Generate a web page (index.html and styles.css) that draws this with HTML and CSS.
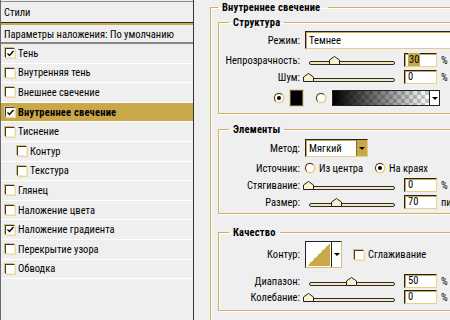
FILE: index.html
```html
<!DOCTYPE html>
<html lang="ru">
<head>
    <meta charset="UTF-8">
    <title>Стиль слоя</title>
    <link rel="stylesheet" href="styles.css">
</head>
<body>
    <div class="dialog">
        <div class="styles-list">
            <div class="list-head">Стили</div>
            <div class="list-blend">Параметры наложения: По умолчанию</div>
            <ul class="effects">
                <li><span class="check on"><svg width="7" height="7" viewBox="0 0 7 7"><path d="M0.5 3.5 L2.5 5.5 L6.5 1" fill="none" stroke="#000" stroke-width="1.4"/></svg></span>Тень</li>
                <li><span class="check"></span>Внутренняя тень</li>
                <li><span class="check"></span>Внешнее свечение</li>
                <li class="active"><span class="check on"><svg width="7" height="7" viewBox="0 0 7 7"><path d="M0.5 3.5 L2.5 5.5 L6.5 1" fill="none" stroke="#000" stroke-width="1.4"/></svg></span>Внутреннее свечение</li>
                <li><span class="check"></span>Тиснение</li>
                <li class="sub"><span class="check"></span>Контур</li>
                <li class="sub"><span class="check"></span>Текстура</li>
                <li><span class="check"></span>Глянец</li>
                <li><span class="check"></span>Наложение цвета</li>
                <li><span class="check on"><svg width="7" height="7" viewBox="0 0 7 7"><path d="M0.5 3.5 L2.5 5.5 L6.5 1" fill="none" stroke="#000" stroke-width="1.4"/></svg></span>Наложение градиента</li>
                <li><span class="check"></span>Перекрытие узора</li>
                <li><span class="check"></span>Обводка</li>
            </ul>
        </div>

        <div class="settings">
            <fieldset class="group outer">
                <legend>Внутреннее свечение</legend>

                <fieldset class="group structure">
                    <legend>Структура</legend>
                    <div class="row tall mt2">
                        <span class="label">Режим:</span>
                        <div class="select wide">Темнее</div>
                    </div>
                    <div class="row mt3">
                        <span class="label">Непрозрачность:</span>
                        <div class="slider">
                            <div class="track"></div>
                            <svg class="thumb" style="left: 30%" width="11" height="9" viewBox="0 0 11 9"><polygon points="5.5,0.5 10.5,4 10.5,8.5 0.5,8.5 0.5,4" fill="#fbf1cf" stroke="#222"/></svg>
                        </div>
                        <div class="num"><span class="selected">30</span></div>
                        <span class="unit">%</span>
                    </div>
                    <div class="row mt1">
                        <span class="label">Шум:</span>
                        <div class="slider">
                            <div class="track"></div>
                            <svg class="thumb" style="left: 0%" width="11" height="9" viewBox="0 0 11 9"><polygon points="5.5,0.5 10.5,4 10.5,8.5 0.5,8.5 0.5,4" fill="#fbf1cf" stroke="#222"/></svg>
                        </div>
                        <div class="num">0</div>
                        <span class="unit">%</span>
                    </div>
                    <div class="row tall mt4 color-row">
                        <span class="radio on first"></span>
                        <span class="swatch"></span>
                        <span class="radio second"></span>
                        <span class="gradient"></span>
                        <span class="drop-btn"><i class="arrow"></i></span>
                    </div>
                </fieldset>

                <fieldset class="group elements">
                    <legend>Элементы</legend>
                    <div class="row tall mt3">
                        <span class="label">Метод:</span>
                        <div class="select method">Мягкий<span class="select-btn"><i class="arrow"></i></span></div>
                    </div>
                    <div class="row mt3">
                        <span class="label">Источник:</span>
                        <span class="option first-opt"><span class="radio"></span>Из центра</span>
                        <span class="option"><span class="radio on"></span>На краях</span>
                    </div>
                    <div class="row mt1">
                        <span class="label">Стягивание:</span>
                        <div class="slider">
                            <div class="track"></div>
                            <svg class="thumb" style="left: 0%" width="11" height="9" viewBox="0 0 11 9"><polygon points="5.5,0.5 10.5,4 10.5,8.5 0.5,8.5 0.5,4" fill="#fbf1cf" stroke="#222"/></svg>
                        </div>
                        <div class="num">0</div>
                        <span class="unit">%</span>
                    </div>
                    <div class="row mt1">
                        <span class="label">Размер:</span>
                        <div class="slider">
                            <div class="track"></div>
                            <svg class="thumb" style="left: 32%" width="11" height="9" viewBox="0 0 11 9"><polygon points="5.5,0.5 10.5,4 10.5,8.5 0.5,8.5 0.5,4" fill="#fbf1cf" stroke="#222"/></svg>
                        </div>
                        <div class="num">70</div>
                        <span class="unit">пикс.</span>
                    </div>
                </fieldset>

                <fieldset class="group quality">
                    <legend>Качество</legend>
                    <div class="row contour-row mt2">
                        <span class="label">Контур:</span>
                        <div class="contour">
                            <span class="curve"></span>
                            <span class="contour-btn"><i class="arrow"></i></span>
                        </div>
                        <span class="check plain"></span>
                        <span class="check-text">Сглаживание</span>
                    </div>
                    <div class="row mt5">
                        <span class="label">Диапазон:</span>
                        <div class="slider">
                            <div class="track"></div>
                            <svg class="thumb" style="left: 50%" width="11" height="9" viewBox="0 0 11 9"><polygon points="5.5,0.5 10.5,4 10.5,8.5 0.5,8.5 0.5,4" fill="#fbf1cf" stroke="#222"/></svg>
                        </div>
                        <div class="num">50</div>
                        <span class="unit">%</span>
                    </div>
                    <div class="row">
                        <span class="label">Колебание:</span>
                        <div class="slider">
                            <div class="track"></div>
                            <svg class="thumb" style="left: 0%" width="11" height="9" viewBox="0 0 11 9"><polygon points="5.5,0.5 10.5,4 10.5,8.5 0.5,8.5 0.5,4" fill="#fbf1cf" stroke="#222"/></svg>
                        </div>
                        <div class="num">0</div>
                        <span class="unit">%</span>
                    </div>
                </fieldset>
            </fieldset>
        </div>
    </div>
</body>
</html>
```

FILE: styles.css
```css
* {
    margin: 0;
    padding: 0;
    box-sizing: border-box;
}

body {
    width: 450px;
    height: 320px;
    overflow: hidden;
    background: #efefef;
    color: #000;
    font: 10.5px/13px "Roboto Condensed", "Liberation Sans", sans-serif;
}

.dialog {
    display: flex;
    height: 320px;
}

/* left column: list of effects */
.styles-list {
    width: 194px;
    flex: none;
    border-left: 1px solid #6a6a6a;
    border-right: 1px solid #333;
    background: #efefef;
}
.list-head {
    height: 22px;
    margin-top: 1px;
    padding: 4px 3px 0;
    border-top: 1px solid #8d8d8d;
    border-bottom: 1px solid #2e2e2e;
}
.list-blend {
    height: 21px;
    padding: 2px 3px 0;
    border-top: 2px solid #c9a84a;
    border-bottom: 2px solid #858585;
    line-height: 15px;
    white-space: nowrap;
}
.effects {
    list-style: none;
}
.effects li {
    height: 19.6px;
    display: flex;
    align-items: center;
    padding-left: 4px;
    border-bottom: 1px solid #fff;
}
.effects li.sub {
    padding-left: 16px;
}
.effects li.active {
    background: #c9a84a;
    font-weight: bold;
    letter-spacing: 0.2px;
}

.check {
    width: 10px;
    height: 10px;
    margin-right: 3px;
    flex: none;
    display: flex;
    align-items: center;
    justify-content: center;
    background: #fff;
    border: 1px solid;
    border-color: #3a3a3a #f6ecc8 #f6ecc8 #3a3a3a;
    box-shadow: -1px -1px 0 #d9bf72, 1px 1px 0 #e8d79f;
}

/* right column: settings */
.settings {
    flex: 1;
    min-width: 0;
    padding: 1px 0 0 16px;
}
.group {
    min-width: 0;
    border: 1px solid #d1b05a;
    box-shadow: inset 1px 1px 0 #fff, 1px 1px 0 #fff;
    padding: 0 0 5px 4px;
}
.group legend {
    margin-left: 6px;
    padding: 0 4px;
    font-weight: bold;
    letter-spacing: 0.2px;
    line-height: 13px;
}
.outer {
    width: 320px;
    padding: 2px 0 30px 7px;
}
.outer > legend {
    margin-left: 0;
    padding: 0 8px 0 4px;
}
.structure {
    padding-bottom: 6px;
}
.elements {
    margin-top: 9px;
    padding-bottom: 3px;
}
.quality {
    margin-top: 12px;
    padding-bottom: 5px;
}

.row {
    display: flex;
    align-items: center;
    height: 16px;
    white-space: nowrap;
}
.row.tall {
    height: 18px;
}
.mt1 { margin-top: 1px; }
.mt2 { margin-top: 2px; }
.mt3 { margin-top: 3px; }
.mt4 { margin-top: 4px; }
.mt5 { margin-top: 5px; }

.label {
    width: 77px;
    flex: none;
    margin-right: 5px;
    text-align: right;
}

.select {
    height: 18px;
    display: flex;
    align-items: center;
    padding-left: 3px;
    background: #fff;
    border: 1px solid;
    border-color: #222 #e2cc88 #e2cc88 #222;
    box-shadow: inset 1px 1px 0 #c9a84a;
}
.select.wide {
    flex: 1;
}
.select.method {
    width: 63px;
    justify-content: space-between;
    padding-right: 0;
}
.select-btn {
    width: 11px;
    height: 16px;
    display: flex;
    align-items: center;
    justify-content: center;
    background: #c9a84a;
    border-left: 1px solid #8a7030;
}
.arrow {
    width: 0;
    height: 0;
    border-left: 3px solid transparent;
    border-right: 3px solid transparent;
    border-top: 3px solid #000;
}

.slider {
    position: relative;
    width: 86px;
    height: 16px;
    flex: none;
    margin: 0 9px 0 4px;
    padding-top: 9px;
}
.track {
    height: 4px;
    border: 1px solid #2a2a2a;
    border-radius: 2px;
    background: #f3e6bb;
}
.thumb {
    position: absolute;
    top: 4px;
    margin-left: -6px;
}

.num {
    width: 33px;
    height: 14px;
    flex: none;
    padding-left: 3px;
    line-height: 12px;
    background: #fff;
    border: 1px solid;
    border-color: #222 #e6d08e #e6d08e #222;
    box-shadow: inset 1px 1px 0 #c9a84a;
}
.num .selected {
    background: #c9a84a;
    padding: 0 1px;
}
.unit {
    margin-left: 4px;
}

.radio {
    width: 10px;
    height: 10px;
    flex: none;
    border-radius: 50%;
    background: #fff;
    border: 1px solid;
    border-color: #333 #e0c67a #e0c67a #333;
    box-shadow: 0 0 0 1px #f3e4b0;
    display: flex;
    align-items: center;
    justify-content: center;
}
.radio.on::after {
    content: "";
    width: 4px;
    height: 4px;
    border-radius: 50%;
    background: #000;
}

.color-row .first {
    margin-left: 51px;
}
.swatch {
    width: 13px;
    height: 16px;
    margin-left: 6px;
    background: #000;
    border: 1px solid #555;
    box-shadow: 0 0 0 1px #e8d79f;
}
.color-row .second {
    margin-left: 13px;
}
.gradient {
    width: 98px;
    height: 16px;
    margin-left: 6px;
    border: 1px solid #222;
    background:
        linear-gradient(to right, #000, rgba(0, 0, 0, 0)),
        repeating-conic-gradient(#c8c8c8 0 25%, #fff 0 50%) 0 0 / 8px 8px;
}
.drop-btn {
    width: 10px;
    height: 16px;
    display: flex;
    align-items: center;
    justify-content: center;
    background: #fff;
    border: 1px solid #222;
    border-left: none;
}

.option {
    display: flex;
    align-items: center;
    gap: 4px;
}
.option.first-opt {
    width: 70px;
}

.contour-row {
    height: 27px;
}
.contour {
    width: 37px;
    height: 27px;
    display: flex;
    border: 1px solid;
    border-color: #222 #d9bf72 #d9bf72 #222;
}
.curve {
    flex: 1;
    background: linear-gradient(to bottom right, #fff 50%, #c9a84a 50%);
    border: 1px solid #fff;
}
.contour-btn {
    width: 10px;
    display: flex;
    align-items: center;
    justify-content: center;
    background: #fff;
    border-left: 1px solid #222;
}
.check.plain {
    margin-left: 12px;
    margin-right: 4px;
}
```
